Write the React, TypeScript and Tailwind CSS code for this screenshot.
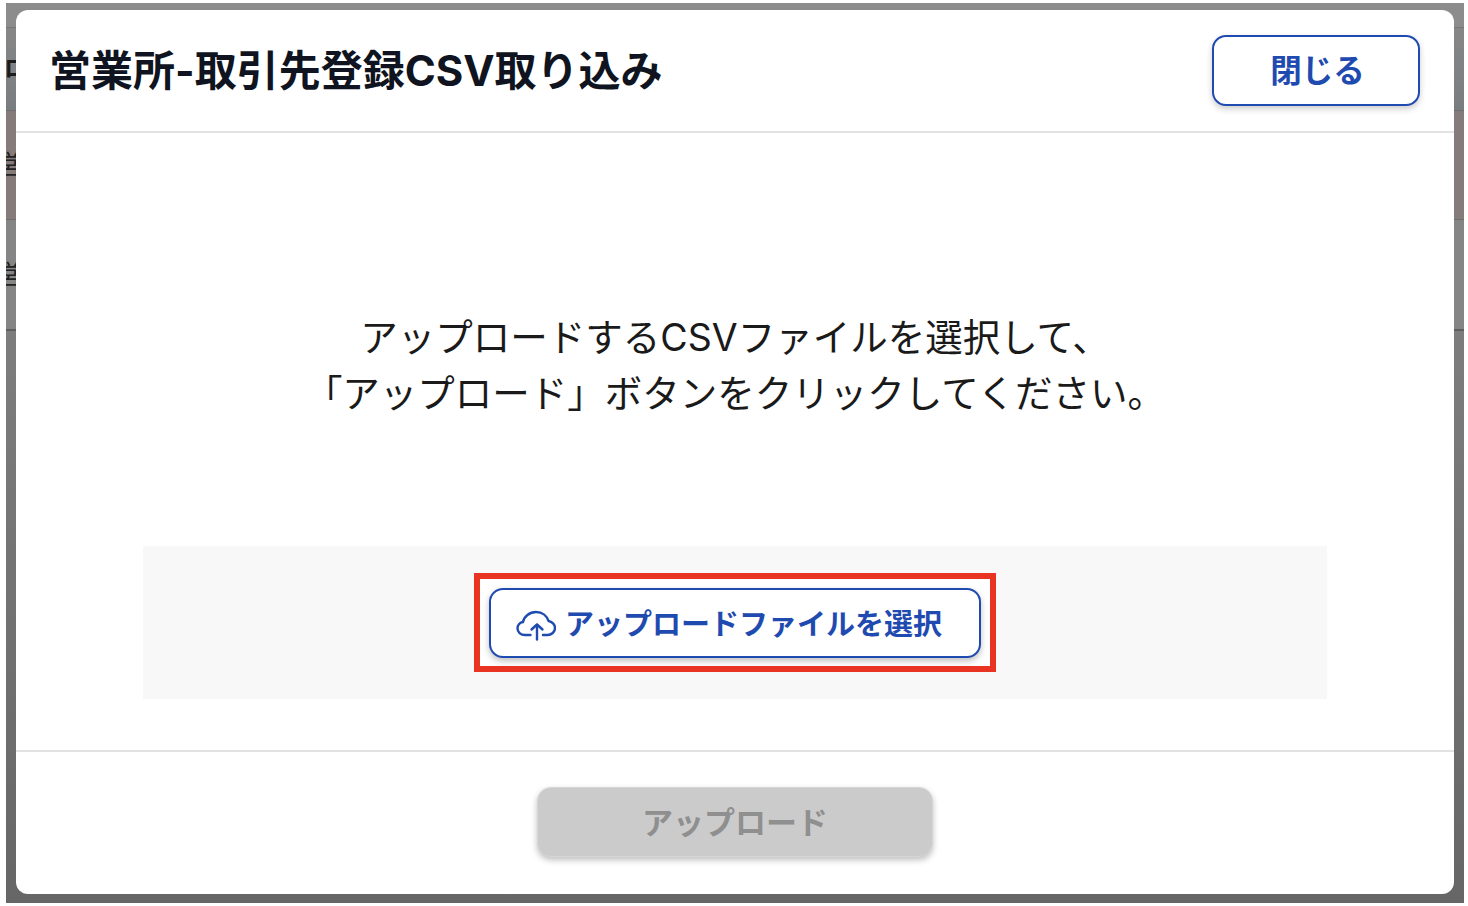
import React from "react";

const font = "font-['Inter','Noto_Sans_CJK_JP',sans-serif]";

function Cloud() {
  return (
    <svg width="40" height="36" viewBox="0 0 40 36" fill="none" stroke="#1f4bb0" strokeWidth="2.4" strokeLinecap="round" strokeLinejoin="round" className="mr-[9px] shrink-0">
      <path d="M14.5 30H9C4.5 30 1.5 27 1.5 23.5C1.5 20 4 17.5 7 17C8 11.5 13.5 7 20 7C26.5 7 31 11 32.5 16C36 16.5 39 19.5 39 23C39 27 35.5 30 31.5 30H27" />
      <path d="M21 34.5V20" />
      <path d="M15.5 24.5L21 19.5L26.5 24.5" />
    </svg>
  );
}

export default function App() {
  return (
    <div className={`h-[906px] w-[1468px] overflow-hidden bg-white pl-[6px] pr-[4px] pt-[3px] ${font}`}>
      <div className="relative h-[900px] w-[1458px] overflow-hidden bg-[#7d7d7d]">
        <div className="flex h-full w-full flex-col">
          <div className="h-[25px] shrink-0 border-b border-[#777] bg-[#8c8c8c]" />
          <div className="flex h-[83px] shrink-0 items-center border-b border-[#6f6f6f] bg-gradient-to-b from-[#868686] to-[#7a7d80] text-[24px] font-bold leading-none text-[#1c1c1c]">
            <span className="-ml-[2px]">ロ</span>
          </div>
          <div className="flex h-[109px] shrink-0 items-center border-b border-[#6f6f6f] bg-[#857b7a] text-[26px] leading-none text-[#222]">
            <span className="-ml-[10px]">営</span>
          </div>
          <div className="flex h-[111px] shrink-0 items-center border-b-2 border-[#5f5f5f] bg-[#858585] text-[26px] leading-none text-[#222]">
            <span className="-ml-[10px]">営</span>
          </div>
          <div className="flex-1 bg-gradient-to-b from-[#7d7d7d] to-[#666666]" />
        </div>
        <div className="absolute left-[10px] top-[7px] flex h-[884px] w-[1438px] flex-col rounded-[12px] bg-white">
          <header className="flex h-[123px] shrink-0 items-center justify-between border-b-2 border-[#e2e2e2] pl-[33px] pr-[34px]">
            <h1 className="text-[42px] font-bold leading-none text-[#0f1420]">営業所-取引先登録CSV取り込み</h1>
            <button className="flex h-[71px] w-[208px] items-center justify-center rounded-[14px] border-2 border-[#1f4bb0] bg-white pl-[3px] text-[31.5px] font-bold text-[#1f4bb0] shadow-[0_3px_6px_rgba(0,0,0,0.2)]">閉じる</button>
          </header>
          <main className="flex flex-1 flex-col items-center">
            <p className="mt-[177px] text-center text-[37.5px] leading-[56px] text-[#1a1a1a]">
              アップロードするCSVファイルを選択して、
              <br />
              「アップロード」ボタンをクリックしてください。
            </p>
            <div className="mt-[124px] flex h-[153px] w-[1184px] items-center justify-center bg-[#f8f8f8]">
              <div className="border-[6px] border-[#e93323] bg-white px-[9px] pb-[8px] pt-[9px]">
                <button className="flex h-[70px] w-[492px] items-center justify-center rounded-[14px] border-2 border-[#1f4bb0] bg-white pr-[12px] text-[29px] font-bold text-[#1f4bb0] shadow-[0_3px_6px_rgba(0,0,0,0.25)]">
                  <Cloud />
                  <span className="pt-[3px]">アップロードファイルを選択</span>
                </button>
              </div>
            </div>
          </main>
          <footer className="flex h-[144px] shrink-0 items-center justify-center border-t-2 border-[#e2e2e2] pb-[2px]">
            <button className="h-[70px] w-[396px] rounded-[14px] border border-[#d6d6d6] bg-[#cbcbcb] pt-[2px] text-[31px] font-bold text-[#8f8f8f] shadow-[0_3px_6px_rgba(0,0,0,0.25)]">アップロード</button>
          </footer>
        </div>
      </div>
    </div>
  );
}
